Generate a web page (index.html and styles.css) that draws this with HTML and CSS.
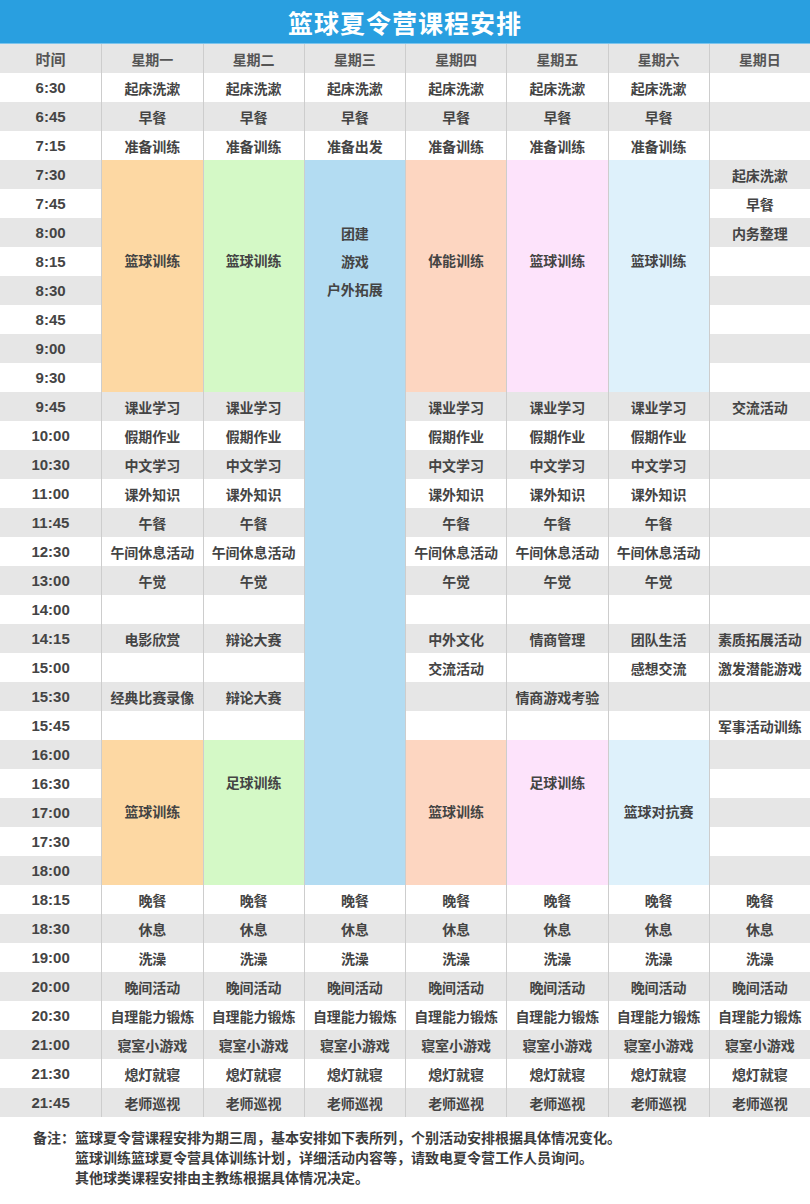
FILE: index.html
```html
<!DOCTYPE html>
<html lang="zh-CN">
<head>
<meta charset="utf-8">
<title>篮球夏令营课程安排</title>
<link rel="stylesheet" href="styles.css">
</head>
<body>
<div class="page">
  <header class="title-bar"><h1>篮球夏令营课程安排</h1></header>
  <div class="schedule">
    <!-- header -->
    <div class="c t hd">时间</div><div class="c hd">星期一</div><div class="c hd">星期二</div><div class="c hd">星期三</div><div class="c hd">星期四</div><div class="c hd">星期五</div><div class="c hd">星期六</div><div class="c hd">星期日</div>
    <!-- 6:30 -->
    <div class="c t">6:30</div><div class="c">起床洗漱</div><div class="c">起床洗漱</div><div class="c">起床洗漱</div><div class="c">起床洗漱</div><div class="c">起床洗漱</div><div class="c">起床洗漱</div><div class="c"></div>
    <!-- 6:45 -->
    <div class="c t">6:45</div><div class="c">早餐</div><div class="c">早餐</div><div class="c">早餐</div><div class="c">早餐</div><div class="c">早餐</div><div class="c">早餐</div><div class="c"></div>
    <!-- 7:15 -->
    <div class="c t">7:15</div><div class="c">准备训练</div><div class="c">准备训练</div><div class="c">准备出发</div><div class="c">准备训练</div><div class="c">准备训练</div><div class="c">准备训练</div><div class="c"></div>
    <!-- 7:30 -->
    <div class="c t">7:30</div>
    <div class="c blk span8 at3 orange">篮球训练</div>
    <div class="c blk span8 at3 green">篮球训练</div>
    <div class="c blk span25 multi blue">团建<br>游戏<br>户外拓展</div>
    <div class="c blk span8 at3 peach">体能训练</div>
    <div class="c blk span8 at3 pink">篮球训练</div>
    <div class="c blk span8 at3 sky">篮球训练</div>
    <div class="c">起床洗漱</div>
    <div class="c t">7:45</div><div class="c">早餐</div>
    <div class="c t">8:00</div><div class="c">内务整理</div>
    <div class="c t">8:15</div><div class="c"></div>
    <div class="c t">8:30</div><div class="c"></div>
    <div class="c t">8:45</div><div class="c"></div>
    <div class="c t">9:00</div><div class="c"></div>
    <div class="c t">9:30</div><div class="c"></div>
    <!-- 9:45 -->
    <div class="c t">9:45</div><div class="c">课业学习</div><div class="c">课业学习</div><div class="c">课业学习</div><div class="c">课业学习</div><div class="c">课业学习</div><div class="c">交流活动</div>
    <div class="c t">10:00</div><div class="c">假期作业</div><div class="c">假期作业</div><div class="c">假期作业</div><div class="c">假期作业</div><div class="c">假期作业</div><div class="c"></div>
    <div class="c t">10:30</div><div class="c">中文学习</div><div class="c">中文学习</div><div class="c">中文学习</div><div class="c">中文学习</div><div class="c">中文学习</div><div class="c"></div>
    <div class="c t">11:00</div><div class="c">课外知识</div><div class="c">课外知识</div><div class="c">课外知识</div><div class="c">课外知识</div><div class="c">课外知识</div><div class="c"></div>
    <div class="c t">11:45</div><div class="c">午餐</div><div class="c">午餐</div><div class="c">午餐</div><div class="c">午餐</div><div class="c">午餐</div><div class="c"></div>
    <div class="c t">12:30</div><div class="c">午间休息活动</div><div class="c">午间休息活动</div><div class="c">午间休息活动</div><div class="c">午间休息活动</div><div class="c">午间休息活动</div><div class="c"></div>
    <div class="c t">13:00</div><div class="c">午觉</div><div class="c">午觉</div><div class="c">午觉</div><div class="c">午觉</div><div class="c">午觉</div><div class="c"></div>
    <div class="c t">14:00</div><div class="c"></div><div class="c"></div><div class="c"></div><div class="c"></div><div class="c"></div><div class="c"></div>
    <div class="c t">14:15</div><div class="c">电影欣赏</div><div class="c">辩论大赛</div><div class="c">中外文化</div><div class="c">情商管理</div><div class="c">团队生活</div><div class="c">素质拓展活动</div>
    <div class="c t">15:00</div><div class="c"></div><div class="c"></div><div class="c">交流活动</div><div class="c"></div><div class="c">感想交流</div><div class="c">激发潜能游戏</div>
    <div class="c t">15:30</div><div class="c">经典比赛录像</div><div class="c">辩论大赛</div><div class="c"></div><div class="c">情商游戏考验</div><div class="c"></div><div class="c"></div>
    <div class="c t">15:45</div><div class="c"></div><div class="c"></div><div class="c"></div><div class="c"></div><div class="c"></div><div class="c">军事活动训练</div>
    <!-- 16:00 -->
    <div class="c t">16:00</div>
    <div class="c blk span5 at2 orange">篮球训练</div>
    <div class="c blk span5 at1 green">足球训练</div>
    <div class="c blk span5 at2 peach">篮球训练</div>
    <div class="c blk span5 at1 pink">足球训练</div>
    <div class="c blk span5 at2 sky">篮球对抗赛</div>
    <div class="c"></div>
    <div class="c t">16:30</div><div class="c"></div>
    <div class="c t">17:00</div><div class="c"></div>
    <div class="c t">17:30</div><div class="c"></div>
    <div class="c t">18:00</div><div class="c"></div>
    <!-- evening -->
    <div class="c t">18:15</div><div class="c">晚餐</div><div class="c">晚餐</div><div class="c">晚餐</div><div class="c">晚餐</div><div class="c">晚餐</div><div class="c">晚餐</div><div class="c">晚餐</div>
    <div class="c t">18:30</div><div class="c">休息</div><div class="c">休息</div><div class="c">休息</div><div class="c">休息</div><div class="c">休息</div><div class="c">休息</div><div class="c">休息</div>
    <div class="c t">19:00</div><div class="c">洗澡</div><div class="c">洗澡</div><div class="c">洗澡</div><div class="c">洗澡</div><div class="c">洗澡</div><div class="c">洗澡</div><div class="c">洗澡</div>
    <div class="c t">20:00</div><div class="c">晚间活动</div><div class="c">晚间活动</div><div class="c">晚间活动</div><div class="c">晚间活动</div><div class="c">晚间活动</div><div class="c">晚间活动</div><div class="c">晚间活动</div>
    <div class="c t">20:30</div><div class="c">自理能力锻炼</div><div class="c">自理能力锻炼</div><div class="c">自理能力锻炼</div><div class="c">自理能力锻炼</div><div class="c">自理能力锻炼</div><div class="c">自理能力锻炼</div><div class="c">自理能力锻炼</div>
    <div class="c t">21:00</div><div class="c">寝室小游戏</div><div class="c">寝室小游戏</div><div class="c">寝室小游戏</div><div class="c">寝室小游戏</div><div class="c">寝室小游戏</div><div class="c">寝室小游戏</div><div class="c">寝室小游戏</div>
    <div class="c t">21:30</div><div class="c">熄灯就寝</div><div class="c">熄灯就寝</div><div class="c">熄灯就寝</div><div class="c">熄灯就寝</div><div class="c">熄灯就寝</div><div class="c">熄灯就寝</div><div class="c">熄灯就寝</div>
    <div class="c t">21:45</div><div class="c">老师巡视</div><div class="c">老师巡视</div><div class="c">老师巡视</div><div class="c">老师巡视</div><div class="c">老师巡视</div><div class="c">老师巡视</div><div class="c">老师巡视</div>
  </div>
  <div class="notes">
    <div class="notes-label">备注：</div>
    <div class="notes-body">
      <p>篮球夏令营课程安排为期三周，基本安排如下表所列，个别活动安排根据具体情况变化。</p>
      <p>篮球训练篮球夏令营具体训练计划，详细活动内容等，请致电夏令营工作人员询问。</p>
      <p>其他球类课程安排由主教练根据具体情况决定。</p>
    </div>
  </div>
</div>
</body>
</html>
```

FILE: styles.css
```css
html, body {
  margin: 0;
  padding: 0;
  background: #ffffff;
}

.page {
  width: 810px;
  font-family: "Liberation Sans", "Noto Sans CJK SC", sans-serif;
  color: #444444;
}

.title-bar {
  height: 44px;
  background: #299fe0;
  display: flex;
  align-items: center;
  justify-content: center;
  border-bottom: 1px solid #7cc4ec;
  box-sizing: border-box;
}

.title-bar h1 {
  margin: 0;
  font-family: "Noto Sans CJK SC", sans-serif;
  font-size: 25px;
  font-weight: 700;
  color: #ffffff;
  letter-spacing: 1px;
}

.schedule {
  display: grid;
  grid-template-columns: repeat(8, 1fr);
  grid-auto-rows: 29px;
  background: repeating-linear-gradient(to bottom, #e6e6e6 0 29px, #ffffff 29px 58px);
}

.c {
  display: flex;
  align-items: center;
  justify-content: center;
  border-left: 1px solid #cdcdcd;
  font-size: 14px;
  font-weight: 700;
  white-space: nowrap;
  overflow: hidden;
}

.c.t {
  border-left: none;
  font-size: 15px;
}

.c.hd {
  color: #555555;
}

.blk {
  align-items: flex-start;
  line-height: 29px;
}

.span8 { grid-row: span 8; }
.span5 { grid-row: span 5; }
.span25 { grid-row: span 25; }

.at1 { padding-top: 29px; }
.at2 { padding-top: 58px; }
.at3 { padding-top: 87px; }

.multi {
  display: block;
  padding-top: 60px;
  line-height: 28px;
  text-align: center;
}

.orange { background: #fdd8a3; }
.green  { background: #d4f9c6; }
.blue   { background: #b3dcf2; }
.peach  { background: #fdd6c1; }
.pink   { background: #fde3fb; }
.sky    { background: #def1fb; }

.notes {
  display: flex;
  padding: 10px 0 0 33px;
  font-family: "Noto Sans CJK SC", sans-serif;
  font-size: 14px;
  font-weight: 700;
  line-height: 20px;
  color: #3d3d3d;
}

.notes-label {
  flex: none;
}

.notes-body p {
  margin: 0;
}
```
